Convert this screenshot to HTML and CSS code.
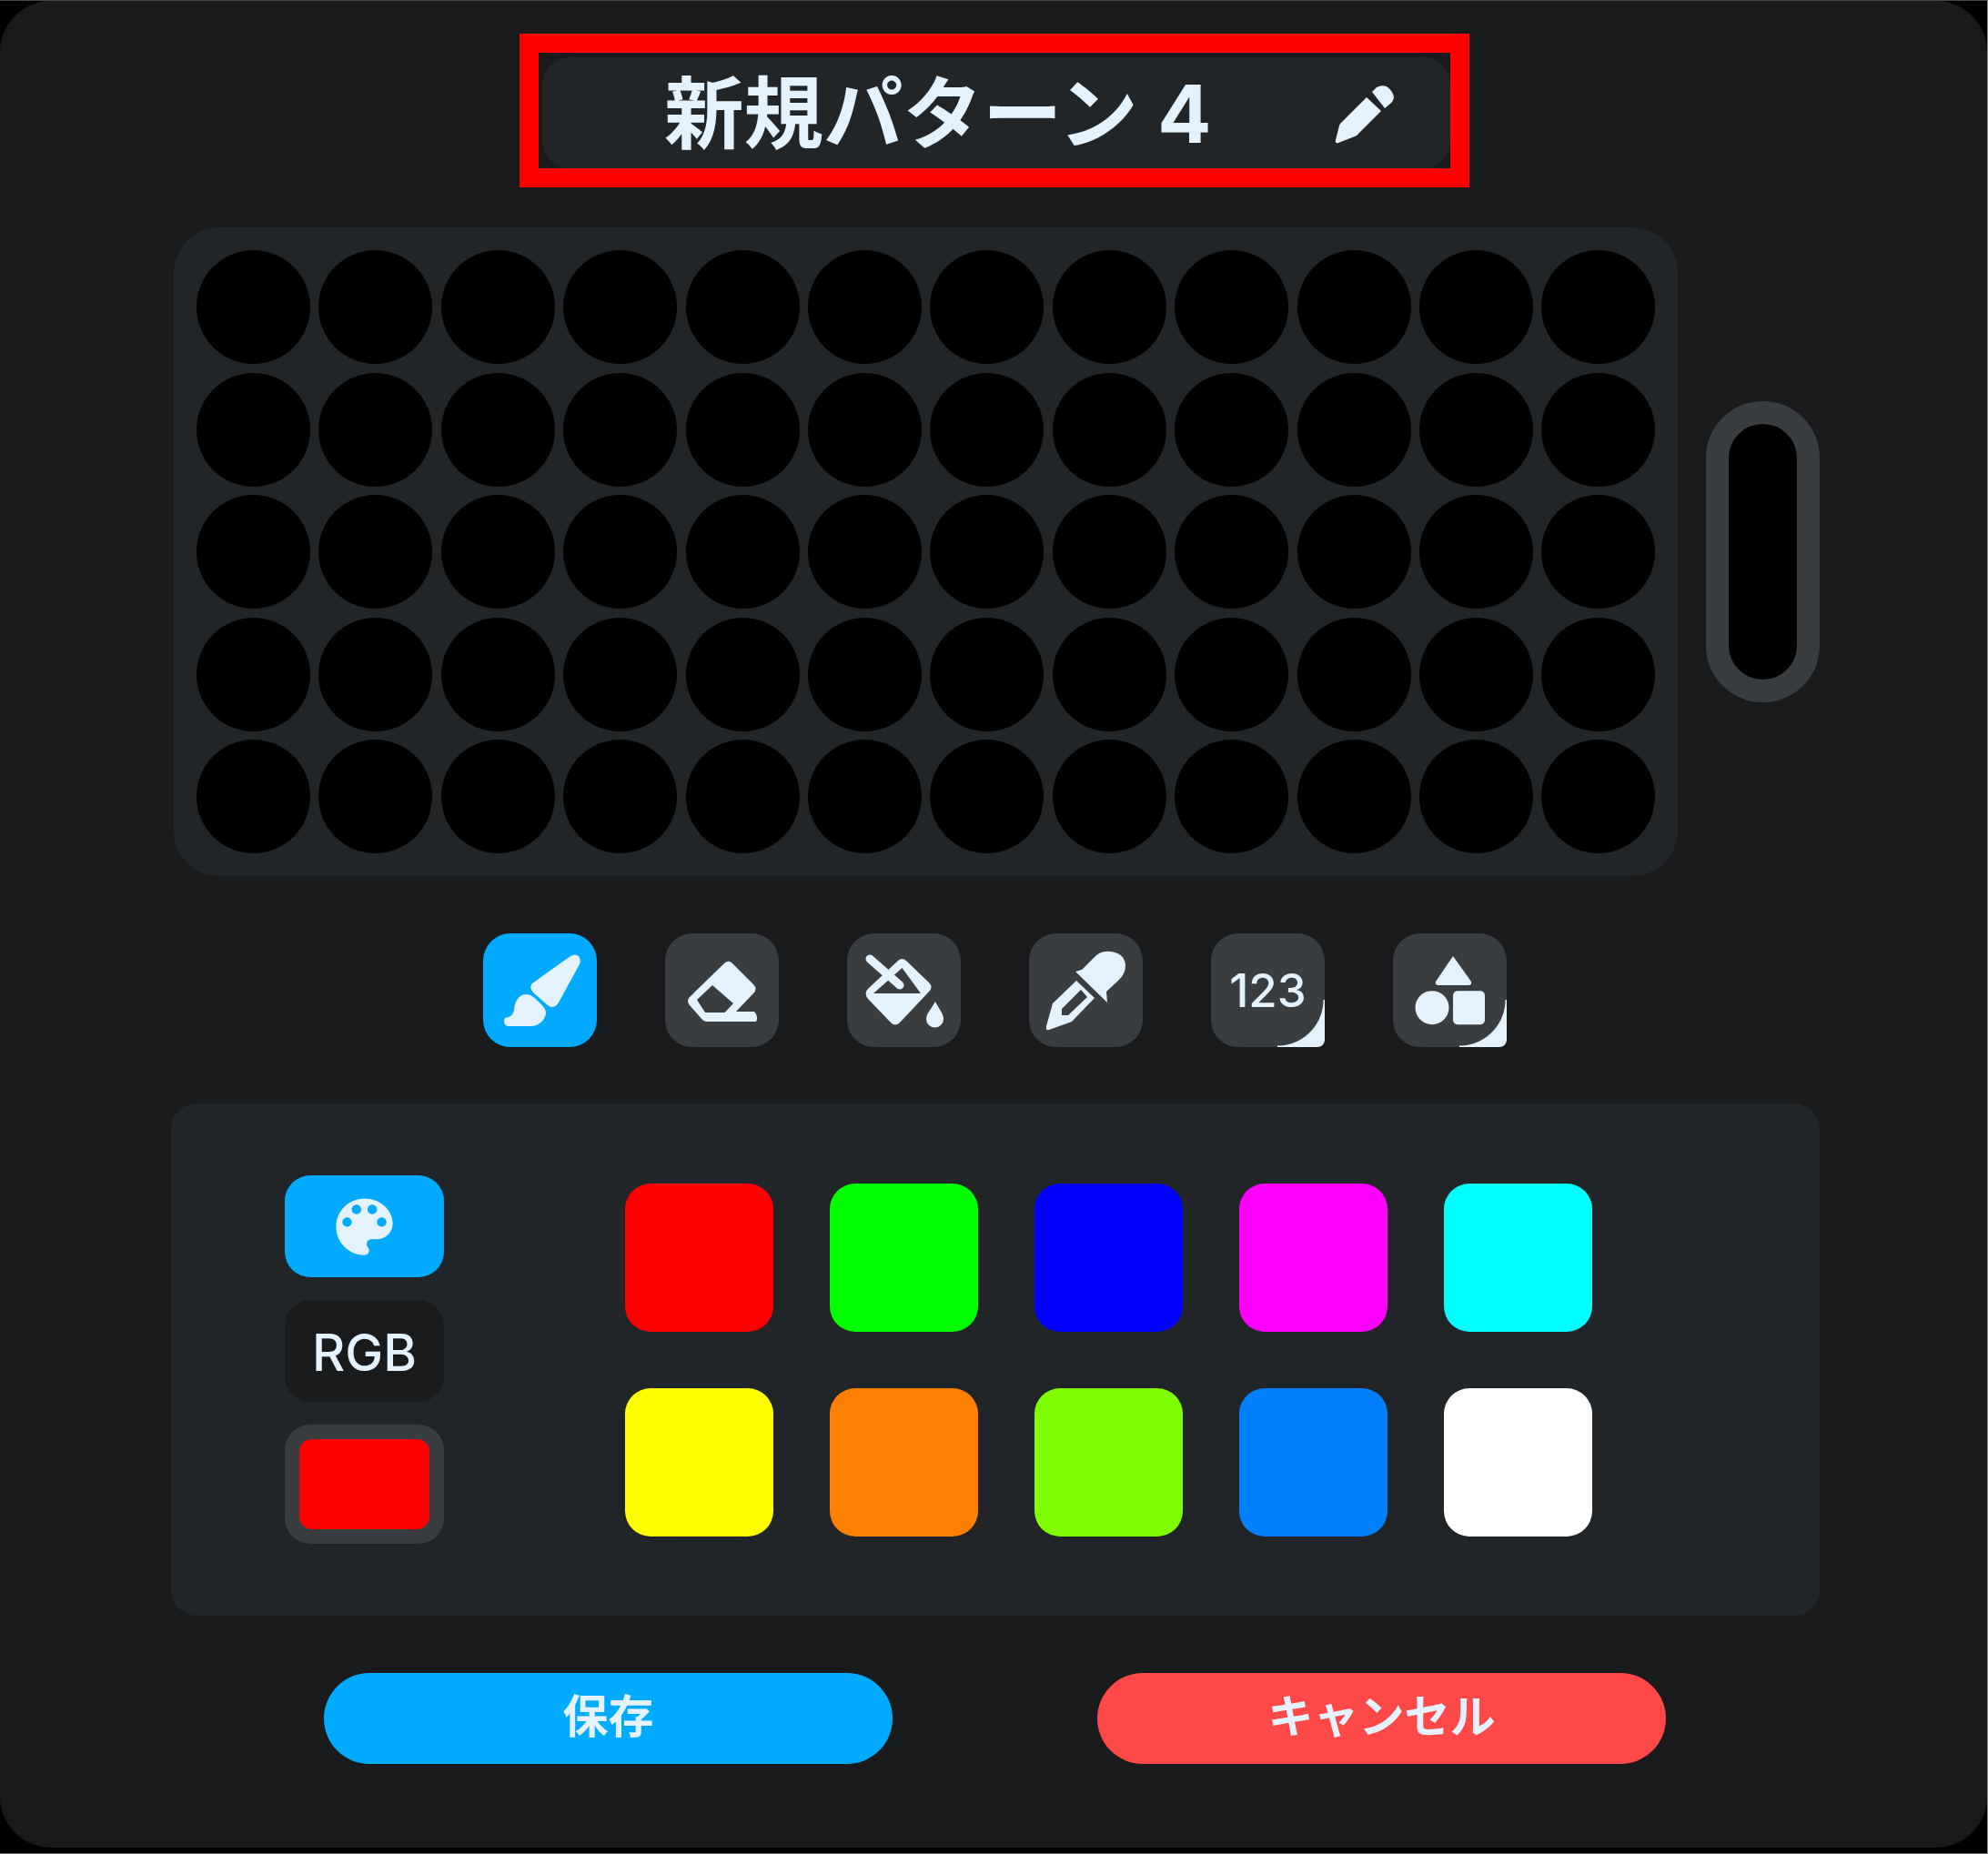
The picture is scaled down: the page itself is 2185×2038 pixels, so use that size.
FILE: index.html
```html
<!DOCTYPE html>
<html lang="ja">
<head>
<meta charset="utf-8">
<title>新規パターン</title>
<link rel="stylesheet" href="styles.css">
</head>
<body>
<main class="card">
  <header class="title-wrap">
    <div class="title-field">
      <h1 class="title">新規パターン 4</h1>
      <svg class="pencil" viewBox="0 0 100 90"><path d="M18 74 L22 58 Q23 55 25 54 L52 27 L68 42 L43 67 Q42 69 39 70 L21 77 Q17 78 18 74 Z"/><path d="M58 21 L63 16 Q68 13 74 15 Q81 20 82 27 Q81 32 78 34 L72 39 Z"/></svg>
    </div>
    <div class="highlight"></div>
  </header>

  <section class="board-row">
    <div class="board" id="board">
      <i></i><i></i><i></i><i></i><i></i><i></i><i></i><i></i><i></i><i></i><i></i><i></i>
      <i></i><i></i><i></i><i></i><i></i><i></i><i></i><i></i><i></i><i></i><i></i><i></i>
      <i></i><i></i><i></i><i></i><i></i><i></i><i></i><i></i><i></i><i></i><i></i><i></i>
      <i></i><i></i><i></i><i></i><i></i><i></i><i></i><i></i><i></i><i></i><i></i><i></i>
      <i></i><i></i><i></i><i></i><i></i><i></i><i></i><i></i><i></i><i></i><i></i><i></i>
    </div>
    <div class="pill"></div>
  </section>

  <nav class="tools">
    <button class="tool active"><svg viewBox="0 0 125 125"><path d="M54 55 L96 25 Q101 22 105 25 Q108 29 106 34 L83 76 Q78 84 71 79 L55 65 Q50 59 54 55 Z"/><path d="M24 93 C30 92 33 90 34 84 C34.500 74 40 67 47 67 C52 67 56 70 62 76 C67 81 69 84 69 88 C68 96 60 102 53 102 L28 102 C23 102 22 96 24 93 Z"/></svg></button>
    <button class="tool"><svg viewBox="0 0 125 125"><path fill-rule="evenodd" d="M64 34 Q69 28 74 33 L97 56 Q102 61 97 66 L78 86 L98 86 Q103 91 100 97 L46 97 Q43 97 41 95 L27 79 Q23 74 27 70 Z M52 57 L35 73 L44 87 L65.500 87 L75 77 Z"/></svg></button>
    <button class="tool"><svg viewBox="0 0 125 125"><path fill-rule="evenodd" d="M55 31 Q60.500 25 66 31 L90 54 Q95 59 90 64 L58 98 Q53 103 48 98 L24 73 Q17 66 24 60 Z M60.500 38 L29 66 L81 66 Z"/><path class="stick" d="M25 28 L58 57"/><path d="M96.800 75 C101 83 106 88 106 94 A9.500 9.500 0 0 1 87 94 C87 88 93 83 96.800 75 Z"/></svg></button>
    <button class="tool"><svg viewBox="0 0 125 125"><path d="M51 42 L58 40 L70 28 Q78 18 90 20 Q105 22 106 35 Q106 45 98 52 L85 64 L86 76 Z"/><path fill-rule="evenodd" d="M52 52 L72 71 L47 97 L22 106 Q18 107 19 102 L26 77 Z M57 62 L36 83 L36 90 L43 90 L64 70 Z"/></svg></button>
    <button class="tool corner"><span class="digits">123</span></button>
    <button class="tool corner"><svg viewBox="0 0 125 125"><path d="M66 25 L86 53 Q87 57 83 57 L50 57 Q46 57 47 53 Z"/><circle cx="43" cy="81.700" r="18.500"/><rect x="66" y="63.300" width="35" height="37" rx="5"/></svg></button>
  </nav>

  <section class="colors">
    <div class="modes">
      <button class="mode mode-palette"><svg viewBox="0 0 24 24"><path d="M12 3c-4.970 0-9 4.030-9 9s4.030 9 9 9c.83 0 1.500-.67 1.500-1.500 0-.39-.15-.74-.39-1.010-.23-.26-.38-.61-.38-.99 0-.83.67-1.500 1.500-1.500H16c2.760 0 5-2.240 5-5 0-4.420-4.030-8-9-8zm-5.500 9c-.83 0-1.500-.67-1.500-1.500S5.670 9 6.500 9 8 9.670 8 10.500 7.330 12 6.500 12zm3-4C8.670 8 8 7.330 8 6.500S8.670 5 9.500 5s1.500.67 1.500 1.500S10.330 8 9.500 8zm5 0c-.83 0-1.500-.67-1.500-1.500S13.670 5 14.500 5s1.500.67 1.500 1.500S15.330 8 14.500 8zm3 4c-.83 0-1.500-.67-1.500-1.500S16.670 9 17.500 9s1.500.67 1.500 1.500-.67 1.500-1.500 1.500z"/></svg></button>
      <button class="mode mode-rgb">RGB</button>
      <div class="current"><span class="current-fill"></span></div>
    </div>
    <div class="swatches">
      <span class="sw red"></span><span class="sw green"></span><span class="sw blue"></span><span class="sw magenta"></span><span class="sw cyan"></span>
      <span class="sw yellow"></span><span class="sw orange"></span><span class="sw lime"></span><span class="sw azure"></span><span class="sw white"></span>
    </div>
  </section>

  <footer class="actions">
    <button class="action save">保存</button>
    <button class="action cancel">キャンセル</button>
  </footer>
</main>
</body>
</html>
```

FILE: styles.css
```css
* { box-sizing: border-box; }
html, body { margin: 0; padding: 0; background: #000; }
body {
  width: 2185px;
  height: 2038px;
  overflow: hidden;
  font-family: Inter, "Noto Sans CJK JP", "Noto Sans", sans-serif;
  color: #e3f2fd;
  border-top: 1px solid #444648;
  border-right: 1px solid #8a8a8a;
  border-bottom: 1px solid #666;
}
button { border: 0; padding: 0; margin: 0; font: inherit; color: inherit; }
svg { display: block; fill: #e3f2fd; }

.card {
  width: 2184px;
  height: 2030px;
  background: #191a1c;
  border-radius: 56px;
  padding-top: 57px;
}

.title-wrap {
  position: relative;
  width: 1002px;
  height: 127px;
  margin-left: 592px;
  padding: 5px 0 0 4px;
}
.title-field {
  position: relative;
  height: 122px;
  background: #212527;
  border-radius: 30px;
  display: flex;
  align-items: center;
}
.title {
  margin: 0 0 0 134px;
  padding-top: 1px;
  font-size: 87.500px;
  line-height: 100px;
  font-weight: 700;
  word-spacing: 1px;
  white-space: nowrap;
}
.pencil { width: 100px; height: 90px; position: absolute; left: 854px; top: 17px; }
.highlight {
  position: absolute;
  inset: -21px;
  border: 21px solid #ff0000;
}

.board-row {
  display: flex;
  align-items: center;
  margin: 65px 0 0 191px;
  gap: 31px;
}
.board {
  width: 1653px;
  height: 713px;
  padding: 25px;
  background: #212527;
  border-radius: 50px;
  display: grid;
  grid-template-columns: repeat(12, 125px);
  grid-template-rows: repeat(5, 125px);
  column-gap: 9.400px;
  row-gap: 9.500px;
}
.board i { background: #000; border-radius: 50%; }
.pill {
  width: 125px;
  height: 331px;
  background: #000;
  border: 25px solid #3a3d40;
  border-radius: 63px;
}

.tools {
  display: flex;
  gap: 75px;
  margin: 63px 0 0 531px;
}
.tool {
  position: relative;
  width: 125px;
  height: 125px;
  background: #3a3d40;
  border-radius: 30px;
  display: flex;
  align-items: center;
  justify-content: center;
}
.tool svg { width: 125px; height: 125px; }
.tool.active { background: #00aaff; }
.corner::after {
  content: "";
  position: absolute;
  right: 0;
  bottom: 0;
  width: 52px;
  height: 52px;
  background: radial-gradient(circle at 0 0, transparent 50px, #e3f2fd 51px);
  border-bottom-right-radius: 8px;
}
.stick { fill: none; stroke: #e3f2fd; stroke-width: 9; stroke-linecap: round; }
.digits { font-size: 51px; line-height: 1; font-weight: 500; }

.colors {
  display: flex;
  width: 1812px;
  height: 563px;
  margin: 62px 0 0 188px;
  background: #212527;
  border-radius: 28px;
  padding: 79px 0 0 125px;
}
.modes { display: flex; flex-direction: column; gap: 25px; width: 175px; }
.mode {
  width: 175px;
  height: 112px;
  border-radius: 28px;
  display: flex;
  align-items: center;
  justify-content: center;
}
.mode svg { width: 83px; height: 83px; }
.mode-palette { background: #00aaff; }
.mode-rgb { background: #191a1c; font-size: 56px; font-weight: 500; padding-top: 3px; }
.current {
  width: 175px;
  height: 131px;
  padding: 16px;
  border-radius: 28px;
  background: #3a3d40;
}
.current-fill { display: block; height: 100%; background: #ff0000; border-radius: 14px; }
.swatches {
  display: grid;
  grid-template-columns: repeat(5, 162.500px);
  grid-template-rows: repeat(2, 162.500px);
  gap: 62.500px;
  margin: 9px 0 0 199px;
}
.sw { border-radius: 28px; }
.red { background: #ff0000; }
.green { background: #00ff00; }
.blue { background: #0000ff; }
.magenta { background: #ff00ff; }
.cyan { background: #00ffff; }
.yellow { background: #ffff00; }
.orange { background: #ff8000; }
.lime { background: #80ff00; }
.azure { background: #0080ff; }
.white { background: #ffffff; }

.actions {
  display: flex;
  gap: 225px;
  margin: 63px 0 0 356px;
}
.action {
  width: 625px;
  height: 100px;
  padding-bottom: 13px;
  border-radius: 50px;
  font-size: 50px;
  font-weight: 700;
  display: flex;
  align-items: center;
  justify-content: center;
}
.save { background: #00aaff; }
.cancel { background: #ff4848; }
```
